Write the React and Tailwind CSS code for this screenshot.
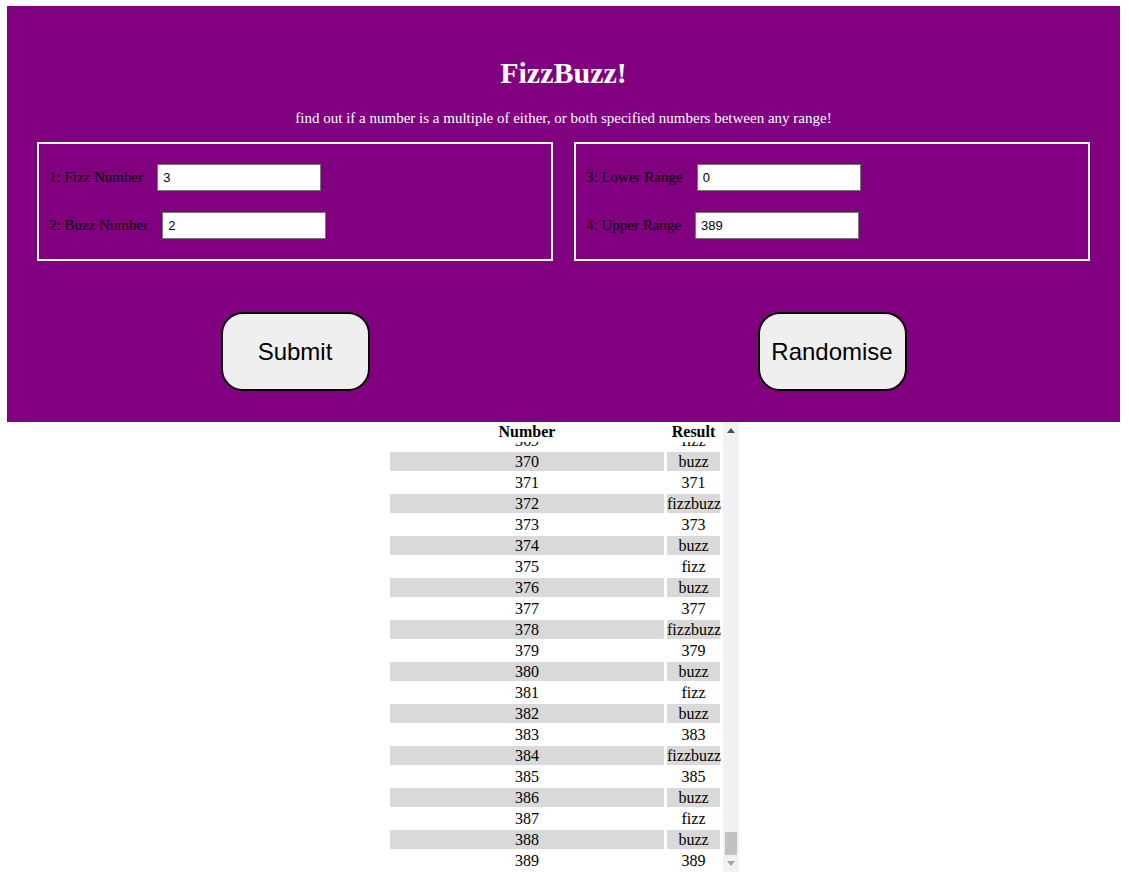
import { useLayoutEffect, useRef } from 'react'

const fizz = 3
const buzz = 2
const lower = 0
const upper = 389

function result(n) {
  if (n % fizz === 0 && n % buzz === 0) return 'fizzbuzz'
  if (n % fizz === 0) return 'fizz'
  if (n % buzz === 0) return 'buzz'
  return String(n)
}

function Field({ label, value }) {
  return (
    <div className="flex items-center gap-[14px] h-[27px]">
      <span className="text-[15px] text-black">{label}</span>
      <input
        defaultValue={value}
        className="w-[164px] h-[27px] bg-white border border-[#767676] px-[5px] text-[13px] text-black font-['Liberation_Sans',Arial,sans-serif] outline-none"
      />
    </div>
  )
}

function BigButton({ children }) {
  return (
    <button className="w-[149px] h-[79px] rounded-[22px] border-2 border-black bg-[#efefef] text-[24px] text-black font-['Liberation_Sans',Arial,sans-serif]">
      {children}
    </button>
  )
}

// the classic scrollbar next to the results list (the browser here draws none)
function ScrollBar() {
  return (
    <div className="w-[16px] bg-[#f1f1f1] flex flex-col">
      <div className="h-[17px] flex items-center justify-center">
        <svg width="8" height="5" viewBox="0 0 8 5">
          <path d="M4 0 L8 5 L0 5 Z" fill="#505050" />
        </svg>
      </div>
      <div className="flex-1 flex flex-col justify-end px-[2px]">
        <div className="h-[23px] bg-[#c1c1c1]" />
      </div>
      <div className="h-[17px] flex items-center justify-center">
        <svg width="8" height="5" viewBox="0 0 8 5">
          <path d="M0 0 L8 0 L4 5 Z" fill="#a3a3a3" />
        </svg>
      </div>
    </div>
  )
}

export default function App() {
  const boxRef = useRef(null)
  const rows = []
  for (let n = lower; n <= upper; n++) rows.push(n)

  useLayoutEffect(() => {
    if (boxRef.current) boxRef.current.scrollTop = boxRef.current.scrollHeight
  }, [])

  return (
    <div className="min-h-screen bg-white font-['Liberation_Serif','Times_New_Roman',serif] pt-[6px]">
      {/* header panel */}
      <div className="ml-[7px] mr-[9px] bg-[#800080] pt-[49px] pb-[31px]">
        <h1 className="text-center text-white font-bold text-[30px] leading-[36px]">FizzBuzz!</h1>
        <p className="mt-[18px] text-center text-white text-[15px] leading-[18px]">
          find out if a number is a multiple of either, or both specified numbers between any range!
        </p>

        <div className="mt-[15px] px-[30px] grid grid-cols-2 gap-[21px]">
          <div className="border-2 border-white px-[10px] py-[20px] flex flex-col gap-[21px]">
            <Field label="1: Fizz Number" value="3" />
            <Field label="2: Buzz Number" value="2" />
          </div>
          <div className="border-2 border-white px-[10px] py-[20px] flex flex-col gap-[21px]">
            <Field label="3: Lower Range" value="0" />
            <Field label="4: Upper Range" value="389" />
          </div>
        </div>

        <div className="mt-[51px] px-[30px] grid grid-cols-2 gap-[21px]">
          <div className="flex justify-center">
            <BigButton>Submit</BigButton>
          </div>
          <div className="flex justify-center">
            <BigButton>Randomise</BigButton>
          </div>
        </div>
      </div>

      {/* results table */}
      <div className="mx-auto w-[349px] h-[450px] flex">
        <div ref={boxRef} className="flex-1 h-full overflow-y-hidden pr-[3px]">
          <div className="sticky top-0 z-10 bg-white grid grid-cols-[274px_53px] gap-x-[3px] h-[20px]">
            <div className="text-center font-bold text-[16px] leading-[19px]">Number</div>
            <div className="text-center font-bold text-[16px] leading-[19px]">Result</div>
          </div>
          <div className="grid grid-cols-[274px_53px] gap-x-[3px] gap-y-[2px] pb-[2px]">
            {rows.map((n) => {
              const bg = n % 2 === 0 ? 'bg-[#d9d9d9]' : 'bg-white'
              return [
                <div key={'n' + n} className={`${bg} h-[19px] text-center text-[16px] leading-[19px]`}>{n}</div>,
                <div key={'r' + n} className={`${bg} h-[19px] text-center text-[16px] leading-[19px]`}>{result(n)}</div>,
              ]
            })}
          </div>
        </div>
        <ScrollBar />
      </div>
    </div>
  )
}
